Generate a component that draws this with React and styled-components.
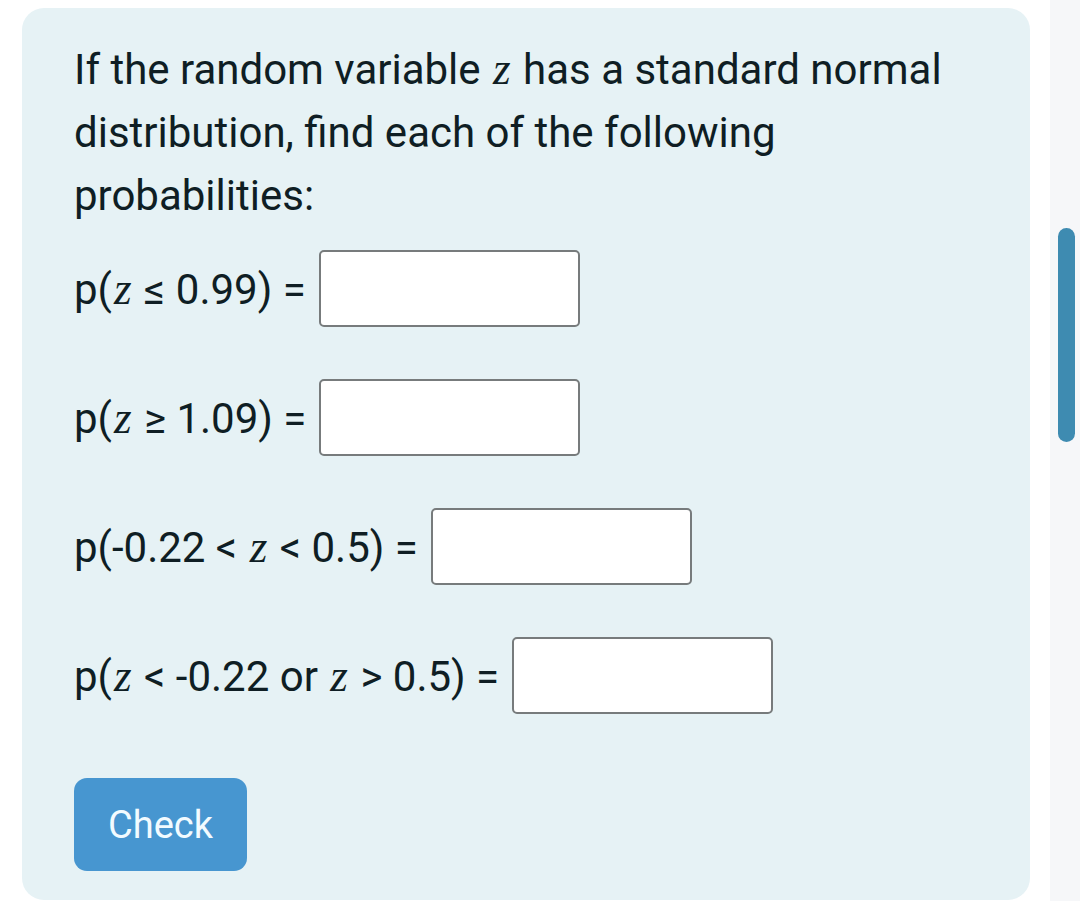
import React from 'react'
import styled, { createGlobalStyle } from 'styled-components'

const GlobalStyle = createGlobalStyle`
  html, body {
    margin: 0;
    padding: 0;
    background: #ffffff;
  }
  body {
    font-family: Roboto, "Noto Sans", sans-serif;
    color: #0f1e24;
  }
`

const rows = [
  { parts: ['p(', 'z', ' ≤ 0.99) ='] },
  { parts: ['p(', 'z', ' ≥ 1.09) ='] },
  { parts: ['p(-0.22 < ', 'z', ' < 0.5) ='] },
  { parts: ['p(', 'z', ' < -0.22 or ', 'z', ' > 0.5) ='] },
]

function App() {
  return (
    <>
      <GlobalStyle />
      <StPage>
        <StMain>
          <StCard>
            <StQuestion>
              If the random variable <StZ>z</StZ> has a standard normal distribution, find each of the following probabilities:
            </StQuestion>
            <StRows>
              {rows.map((row, i) => (
                <StRow key={i}>
                  <StLabel>
                    {row.parts.map((p, j) =>
                      p === 'z' ? <StZ key={j}>z</StZ> : <span key={j}>{p}</span>
                    )}
                  </StLabel>
                  <StInput type="text" />
                </StRow>
              ))}
            </StRows>
            <StCheckButton>Check</StCheckButton>
          </StCard>
        </StMain>
        <StScrollTrack>
          <StScrollThumb />
        </StScrollTrack>
      </StPage>
    </>
  )
}

const StPage = styled.div`
  display: flex;
  width: 1080px;
  height: 901px;
  overflow: hidden;
`
const StMain = styled.div`
  width: 1050px;
  padding: 8px 20px 0 22px;
  box-sizing: border-box;
`
const StCard = styled.div`
  background: #e6f2f5;
  border-radius: 22px;
  height: 892px;
  box-sizing: border-box;
  padding: 30px 52px 0;
`
const StQuestion = styled.p`
  margin: 0;
  font-size: 42px;
  line-height: 63px;
`
const StZ = styled.span`
  font-family: "Liberation Serif", "DejaVu Serif", serif;
  font-style: italic;
  font-size: 1.08em;
  padding: 0 2px;
`
const StRows = styled.div`
  display: flex;
  flex-direction: column;
  gap: 52px;
  margin-top: 23px;
`
const StRow = styled.div`
  display: flex;
  align-items: center;
  gap: 13px;
`
const StLabel = styled.span`
  font-size: 42px;
  white-space: pre;
`
const StInput = styled.input`
  width: 261px;
  height: 77px;
  box-sizing: border-box;
  border: 2px solid #777b7c;
  border-radius: 5px;
  background: #ffffff;
  outline: none;
`
const StCheckButton = styled.button`
  margin-top: 64px;
  width: 173px;
  height: 93px;
  border: none;
  border-radius: 13px;
  background: #4796d0;
  color: #f2fbff;
  font-family: Roboto, sans-serif;
  font-size: 38px;
  cursor: pointer;
`
const StScrollTrack = styled.div`
  width: 30px;
  background: #f6f7f9;
  position: relative;
`
const StScrollThumb = styled.div`
  position: absolute;
  top: 228px;
  left: 8px;
  width: 17px;
  height: 214px;
  border-radius: 9px;
  background: #3e8bb1;
`

export default App
